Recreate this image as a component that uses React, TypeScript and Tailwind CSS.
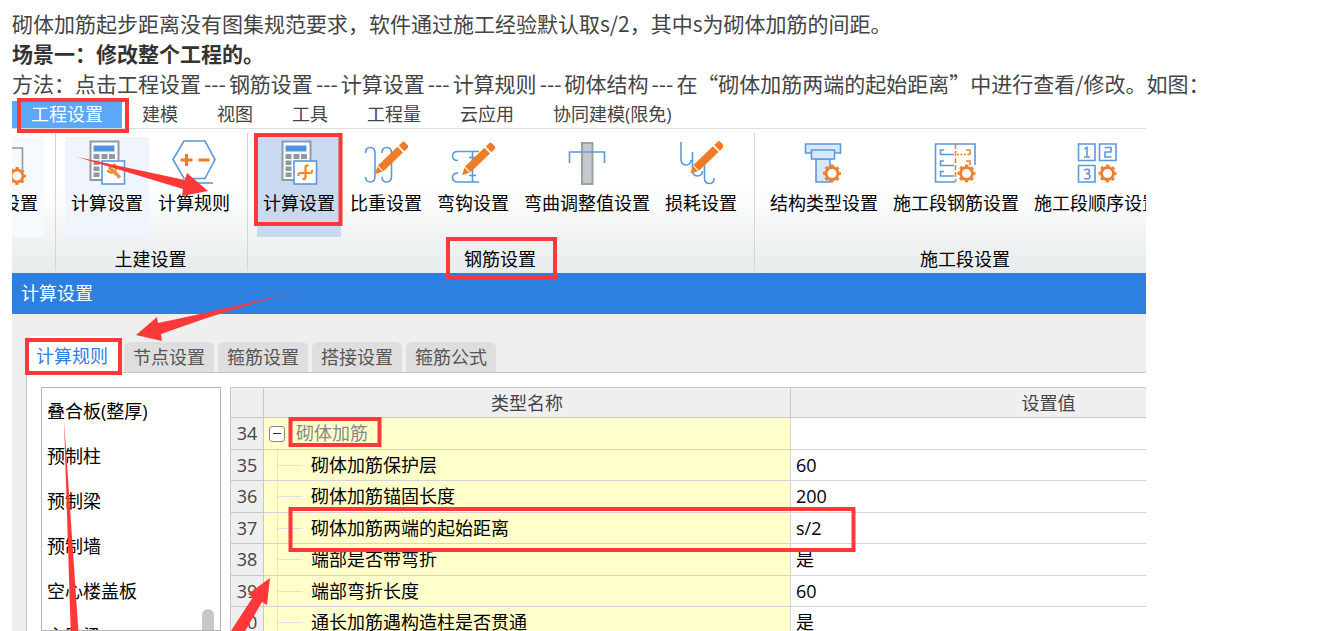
import type { ReactNode } from "react";

const menus = ["建模", "视图", "工具", "工程量", "云应用", "协同建模(限免)"];

const tabs = ["节点设置", "箍筋设置", "搭接设置", "箍筋公式"];

const components = ["叠合板(整厚)", "预制柱", "预制梁", "预制墙", "空心楼盖板", "主肋梁"];

const rules = [
  { no: 35, name: "砌体加筋保护层", value: "60" },
  { no: 36, name: "砌体加筋锚固长度", value: "200" },
  { no: 37, name: "砌体加筋两端的起始距离", value: "s/2" },
  { no: 38, name: "端部是否带弯折", value: "是" },
  { no: 39, name: "端部弯折长度", value: "60" },
  { no: 40, name: "通长加筋遇构造柱是否贯通", value: "是" },
];

const Icon = ({ children }: { children: ReactNode }) => (
  <svg viewBox="0 0 44 46" className="-mx-1 h-[46px] w-11 shrink-0" fill="none" stroke="#5b98dc" strokeWidth="1.6" aria-hidden="true">
    {children}
  </svg>
);

const Gear = ({ x, y }: { x: number; y: number }) => (
  <g stroke="#ee7f2d" transform={`translate(${x} ${y})`}>
    <circle r="6" fill="#fff" strokeWidth="2.8" />
    <circle r="8" strokeWidth="2" strokeDasharray="3.2 3.083" strokeDashoffset="1.6" />
  </g>
);

const Pencil = ({ x, y }: { x: number; y: number }) => (
  <g fill="#ee7c27" stroke="none" transform={`translate(${x} ${y}) rotate(-44)`}>
    <path d="M0 0 L7 -3.6 V3.6 Z" />
    <path d="M8 -4 H35 V4 H8 Z" />
    <path d="M37 -4 H42 Q43.5 -4 43.5 -2.5 V2.5 Q43.5 4 42 4 H37 Z" />
  </g>
);

const Calculator = ({ children }: { children: ReactNode }) => (
  <Icon>
    <rect x="5.5" y="2.5" width="28" height="38.5" fill="#fff" stroke="#8e9aa3" strokeWidth="2" />
    <path d="M8.5 6.5 H29.5 V12.5 H8.5 Z" fill="#4f94e0" stroke="none" />
    <path
      d="M8.5 15 h6 v5 h-6 Z M16.5 15 h6 v5 h-6 Z M24 15 h6 v5 h-6 Z M8.5 21.5 h6 v4.5 h-6 Z M8.5 27.5 h6 v4.5 h-6 Z M8.5 33.5 h6 v4.5 h-6 Z"
      fill="#8e9aa3"
      stroke="none"
    />
    <rect x="17" y="22" width="22.5" height="23" fill="#fff" />
    {children}
  </Icon>
);

const WrenchCalc = () => (
  <Calculator>
    <path d="M24 28 L35 38.5" stroke="#ee8f35" strokeWidth="3.4" />
    <path d="M22.5 31 a4.5 4.5 0 1 0 6 -6" stroke="#ee8f35" strokeWidth="2.4" />
  </Calculator>
);

const CrossCalc = () => (
  <Calculator>
    <path
      d="M31.5 26.5 Q28.5 26 28.5 28.5 V38 Q28.5 40.5 25.5 40 M21.5 37 Q21 34 23.5 34 H33 Q35.5 34 35 31"
      stroke="#f5811f"
      strokeWidth="2.2"
    />
  </Calculator>
);

const Hexagon = () => (
  <Icon>
    <path d="M1 20.5 L12 2 H33 L43 20.5 L33 39.5 H12 Z" fill="#fff" />
    <path d="M12 44 H41" />
    <path d="M8.5 21 H20.5 M14.5 15 V27 M26.5 21 H37.5" stroke="#ee7c27" strokeWidth="3.2" />
  </Icon>
);

const Weight = () => (
  <Icon>
    <path d="M1.5 14 Q1.5 8.5 6.5 8.5 Q11 8.5 11 14 V37 Q11 43 6.5 43 Q1.5 43 1.5 38" />
    <path d="M18 14 Q18 8.5 23 8.5 Q27.5 8.5 27.5 14 V37 Q27.5 43 23 43 Q18 43 18 38" />
    <Pencil x={11} y={35} />
  </Icon>
);

const Hook = () => (
  <Icon>
    <path d="M28 12.5 H7 Q1.5 12.5 1.5 17 Q1.5 21.5 7 21.5 M28 43 H7 Q1.5 43 1.5 38.5 Q1.5 34 7 34 M21.5 12.5 V43 M18 18.5 H25 M18 36.5 H25" />
    <Pencil x={11} y={36} />
  </Icon>
);

const Bend = () => (
  <Icon>
    <rect x="17" y="4" width="10.5" height="41" fill="#c3c9cc" stroke="#97a1a8" strokeWidth="2" />
    <path d="M4.5 24 V13 H39.5 V24" />
  </Icon>
);

const Loss = () => (
  <Icon>
    <path d="M2 3 V20 Q2 26 7 26 Q11.5 26 12 21 M13.5 13 V31 Q13.5 37 18.5 37 Q23 37 23.5 32 M25.5 24 V39 Q25.5 44.5 30.5 44.5 Q35 44.5 35 39" />
    <Pencil x={11.5} y={34.5} />
  </Icon>
);

const Column = () => (
  <Icon>
    <path d="M3.5 5 H38.5 V14 H3.5 Z M14 20 H28 V43 H14 Z" fill="#d8e8fa" />
    <path d="M9.5 11 H32.5 V20 H9.5 Z" fill="#d8e8fa" />
    <Gear x={30} y={34.5} />
  </Icon>
);

const Segment = () => (
  <Icon>
    <path d="M41 26 V5 H1.5 V43 H21" />
    <path d="M10 11 H6.5 V15.5 H20 M10 22 H6.5 V26.5 H20 M10 32.5 H6.5 V37 H20" />
    <path d="M21.5 5 V43" stroke="#ee8430" strokeDasharray="5 2" />
    <path d="M23 15.5 H36" stroke="#ee8430" strokeDasharray="2 1.5" />
    <path d="M32 11 H36 V16 M32 22 H36 V26" stroke="#ee8430" />
    <Gear x={32.5} y={34.5} />
  </Icon>
);

const Order = () => (
  <Icon>
    <path d="M3.5 5 H20 V21.5 H3.5 Z M24.5 5 H41 V21.5 H24.5 Z M3.5 26.5 H20 V43 H3.5 Z" fill="#fff" />
    <path d="M9.5 10 L12 8.5 V18 M9 18 H15 M29.5 8.5 H36 V13 H30 V18 H36.5 M9 31 Q14.5 29 14.5 32.5 Q14.5 34.5 11 34.5 Q15 34.5 15 37.5 Q15 41 9 39.5" />
    <Gear x={32.5} y={34.5} />
  </Icon>
);

const Partial = () => (
  <Icon>
    <path d="M2 9 H24.5 V30" stroke="#8e9aa3" />
    <Gear x={19} y={37} />
  </Icon>
);

const Tool = ({ label, icon, className = "" }: { label: string; icon: ReactNode; className?: string }) => (
  <button type="button" className={`flex h-[100px] shrink-0 flex-col items-center gap-1.5 px-1.5 pt-0.5 whitespace-nowrap text-black ${className}`}>
    {icon}
    <span className="leading-6">{label}</span>
  </button>
);

const Group = ({ label, children }: { label: string; children: ReactNode }) => (
  <div className="mt-1 mb-0.5 flex shrink-0 flex-col justify-between border-l border-[#d3d6d7] pt-1 pr-[11px] pl-[9px]">
    <div className="flex gap-[3px]">{children}</div>
    <p className="text-center leading-6 text-black">{label}</p>
  </div>
);

const Dashes = () => <span className="mx-[3px]">---</span>;

// Rouge d'annotation : cadres et flèches
const Marks = () => (
  <svg className="pointer-events-none absolute top-0 left-0 h-[540px] w-[860px]" viewBox="0 0 860 540" fill="none" aria-hidden="true">
    <g stroke="#fd3838" strokeWidth="4">
      <rect x="7" y="2" width="108" height="31" />
      <rect x="244" y="37" width="84.5" height="89" />
      <rect x="436" y="141" width="107" height="39" />
      <rect x="15" y="242" width="93" height="33" />
      <rect x="278.5" y="321" width="89" height="26" />
      <rect x="278.5" y="411" width="563" height="41" />
    </g>
    <g fill="#fd3838" transform="translate(0 2)">
      <path d="M65 57 L173 80 L175 73 L196 91 L170 96 L171 89 Z" />
      <path d="M283 192 Q215 210 149 234 L150 241 L124 235 L145 217 L146 223 Q200 212 283 192 Z" />
      <path d="M52 320 L67 540 H59 Z" />
      <path d="M258 478 L255 505 L250 502 L228 540 H213 L241 497 L236 494 Z" />
    </g>
  </svg>
);

const App = () => {
  return (
    <main className="flex h-screen flex-col overflow-hidden bg-white pt-2 pr-[171px] pl-3 font-['Open_Sans','Noto_Sans_CJK_SC',sans-serif] text-lg">
      <article className="shrink-0 font-['Noto_Sans_CJK_SC',sans-serif] text-[21px] leading-[30px] whitespace-nowrap text-[#444]" lang="zh-CN">
        <p>砌体加筋起步距离没有图集规范要求，软件通过施工经验默认取s/2，其中s为砌体加筋的间距。</p>
        <p className="font-bold text-[#333]">场景一：修改整个工程的。</p>
        <p>
          方法：点击工程设置
          <Dashes />
          钢筋设置
          <Dashes />
          计算设置
          <Dashes />
          计算规则
          <Dashes />
          砌体结构
          <Dashes />
          在“砌体加筋两端的起始距离”中进行查看/修改。如图：
        </p>
      </article>

      <div className="relative flex min-h-0 flex-1 flex-col overflow-hidden pt-[3px]" lang="zh-CN">
        <nav className="flex shrink-0 gap-px border-b border-[#dcdcdc] leading-[27px] whitespace-nowrap text-[#444]">
          <button type="button" className="bg-[#5ba7f8] px-[19px] text-white">工程设置</button>
          {menus.map((m) => (
            <button key={m} type="button" className="px-[19px]">{m}</button>
          ))}
        </nav>

        {/* Ruban */}
        <div className="flex h-36 shrink-0 bg-linear-to-b from-white from-40% to-[#e7ebeb]">
          <div className="my-1 flex w-[43px] shrink-0 justify-end overflow-hidden pt-1 pr-[11px]">
            <Tool label="设置" icon={<Partial />} className="bg-[#f6f9fe]" />
          </div>
          <Group label="土建设置">
            <Tool label="计算设置" icon={<WrenchCalc />} className="bg-[#f0f5fd]" />
            <Tool label="计算规则" icon={<Hexagon />} />
          </Group>
          <Group label="钢筋设置">
            <Tool label="计算设置" icon={<CrossCalc />} className="bg-[#c8d9f0]" />
            <Tool label="比重设置" icon={<Weight />} />
            <Tool label="弯钩设置" icon={<Hook />} />
            <Tool label="弯曲调整值设置" icon={<Bend />} />
            <Tool label="损耗设置" icon={<Loss />} />
          </Group>
          <Group label="施工段设置">
            <Tool label="结构类型设置" icon={<Column />} />
            <Tool label="施工段钢筋设置" icon={<Segment />} />
            <Tool label="施工段顺序设置" icon={<Order />} />
          </Group>
        </div>

        <h2 className="h-[41px] shrink-0 bg-[#2d7fe0] pl-[9px] leading-10 text-white">计算设置</h2>

        {/* Onglets + contenu */}
        <div className="flex min-h-0 flex-1 flex-col bg-[#efefef] pt-[22px] pl-3.5">
          <div className="flex shrink-0 items-end gap-1 leading-[30px] text-[#555]" role="tablist">
            <button type="button" role="tab" aria-selected="true" className="h-9 rounded-t border-l border-[#c4c6c9] bg-white pt-1 pr-3 pl-[9px] text-[#3080e4]">
              计算规则
            </button>
            {tabs.map((t) => (
              <button key={t} type="button" role="tab" aria-selected="false" className="rounded-t-md bg-[#dedede] px-[9px]">{t}</button>
            ))}
          </div>

          <div className="flex min-h-0 flex-1 gap-[9px] overflow-hidden border-t border-l border-[#c4c6c9] bg-white pt-3.5 pl-3.5">
            <div className="flex w-[180px] shrink-0 justify-between overflow-hidden border border-[#b4b4b4] pr-1.5">
              <ul className="pt-px pl-[5px] leading-[45px] text-black">
                {components.map((c) => (
                  <li key={c}>{c}</li>
                ))}
              </ul>
              <div className="mt-[221px] h-20 w-3 rounded-full bg-[#c8c8c8]" />
            </div>

            <div className="min-w-0 flex-1 overflow-hidden">
              <table className="w-[1076px] table-fixed border-separate border-spacing-0 border-t border-l border-[#c8c8c8] leading-[29px]">
                <thead className="bg-[#efefef] leading-[27px] text-[#444]">
                  <tr>
                    <th className="w-[33px] border-r border-b border-[#c8c8c8]" />
                    <th className="w-[527px] border-r border-b border-[#c8c8c8] pt-0.5 font-normal">类型名称</th>
                    <th className="border-b border-[#c8c8c8] pt-0.5 font-normal">设置值</th>
                  </tr>
                </thead>
                <tbody className="text-black">
                  <tr>
                    <td className="border-r border-b border-[#c8c8c8] bg-[#efefef] text-center text-[#444]">34</td>
                    <td className="border-r border-b border-[#d3d3d3] bg-[#ffffcc]">
                      <div className="flex h-[31px] items-center gap-[11px] pl-[5px] text-[#888]">
                        <button type="button" aria-label="收起" className="flex size-4 items-center justify-center rounded-[3px] border border-[#888] bg-white">
                          <span className="h-px w-2 bg-[#333]" />
                        </button>
                        砌体加筋
                      </div>
                    </td>
                    <td className="border-b border-[#d3d3d3]" />
                  </tr>
                  {rules.map((r) => (
                    <tr key={r.no} className="group">
                      <td className="border-r border-b border-[#c8c8c8] bg-[#efefef] text-center text-[#444]">{r.no}</td>
                      <td className="border-r border-b border-[#d3d3d3] bg-[#ffffcc]">
                        <div className="flex h-[31px] items-center pl-[13px] group-even:h-[30px]">
                          <span className="flex h-full w-[34px] items-center border-l border-[#e2e2e2]">
                            <span className="h-px w-6 bg-[#e2e2e2]" />
                          </span>
                          {r.name}
                        </div>
                      </td>
                      <td className="border-b border-[#d3d3d3] pl-[5px]">{r.value}</td>
                    </tr>
                  ))}
                </tbody>
              </table>
            </div>
          </div>
        </div>

        <Marks />
      </div>
    </main>
  );
};

export default App;
